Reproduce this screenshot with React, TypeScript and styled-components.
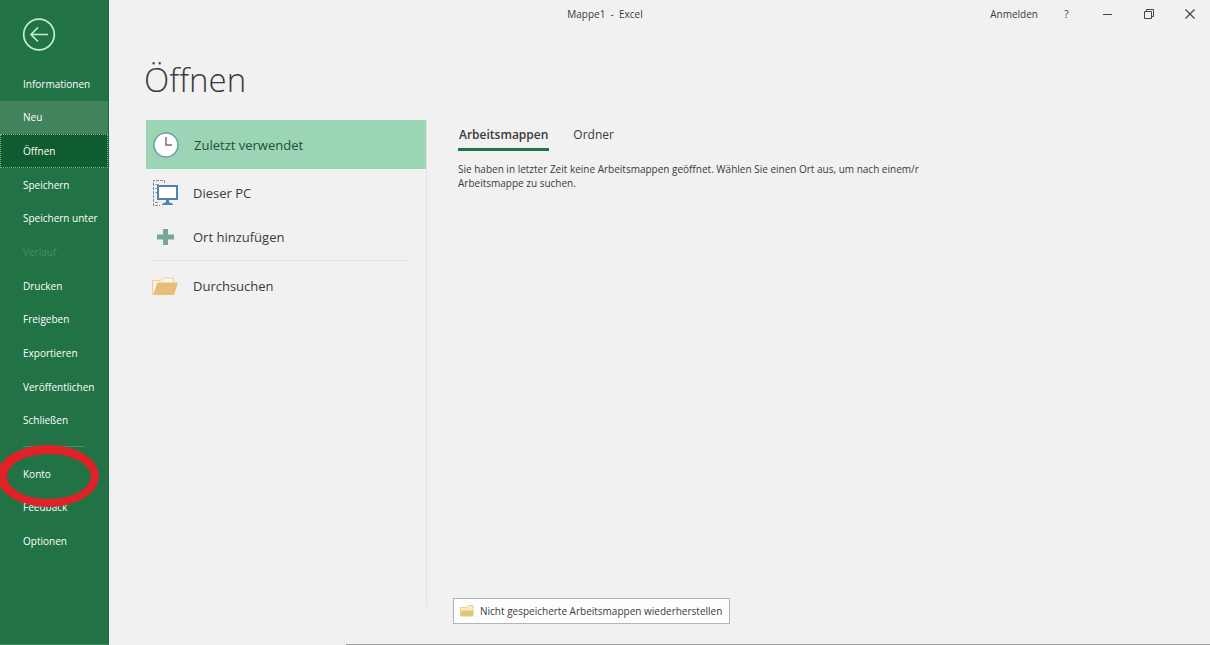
import React from "react";
import styled, { createGlobalStyle } from "styled-components";

const GlobalStyle = createGlobalStyle`
  *, *::before, *::after { box-sizing: border-box; }
  body {
    margin: 0;
    background: #f1f1f1;
    color: #3b3b3b;
    font-family: "Open Sans", "Noto Sans", sans-serif;
    font-size: 10px;
  }
  button { font: inherit; color: inherit; border: 0; background: none; padding: 0; }
  h1, p, ul { margin: 0; padding: 0; }
  ul { list-style: none; }
`;

const Shell = styled.div`
  display: grid;
  grid-template-columns: 109px minmax(0, 1fr);
  grid-template-rows: 27px 1fr 1px;
  min-height: 100vh;
`;

const TitleBar = styled.header`
  grid-column: 1 / -1;
  grid-row: 1;
  display: grid;
  grid-template-columns: 1fr auto 1fr;
  align-items: center;
`;

const DocumentTitle = styled.span`
  grid-column: 2;
  white-space: pre;
`;

const WindowControls = styled.div`
  display: flex;
  justify-content: flex-end;
  height: 27px;
`;

const SignIn = styled.button`
  padding: 0 8px;
`;

const ControlButton = styled.button`
  display: flex;
  align-items: center;
  justify-content: center;
  width: 41px;
`;

const Sidebar = styled.nav`
  grid-column: 1;
  grid-row: 1 / -1;
  z-index: 1;
  display: flex;
  flex-direction: column;
  background: #217346;
  border-right: 1px solid #1b6a43;
  border-bottom: 1px solid #3d8a5e;
  color: #fff;
`;

const BackButton = styled.button`
  width: 34px;
  height: 34px;
  margin: 17px 0 16px 22px;
  svg { display: block; }
`;

const MenuList = styled.ul<{ $height: number }>`
  display: grid;
  grid-auto-rows: 1fr;
  min-height: ${(p) => p.$height}px;
`;

const MenuEntry = styled.li`
  position: relative;
  display: grid;
`;

type MenuState = "normal" | "hover" | "active" | "disabled";

const menuBackground: Record<MenuState, string> = {
  normal: "transparent",
  hover: "#42835d",
  active: "#0e5c2f",
  disabled: "transparent",
};

const MenuButton = styled.button<{ $state: MenuState }>`
  padding: 0 0 0 23px;
  text-align: left;
  white-space: nowrap;
  background: ${(p) => menuBackground[p.$state]};
  color: ${(p) => (p.$state === "disabled" ? "#4b8f69" : "#fff")};
  outline: ${(p) => (p.$state === "active" ? "1px dotted #7fb093" : "none")};
  outline-offset: -1px;
`;

const MenuDivider = styled.hr`
  width: 61px;
  height: 1px;
  margin: 9px 0 10px 23px;
  border: 0;
  background: #439067;
`;

const Marker = styled.svg`
  position: absolute;
  left: -3px;
  top: -13px;
  z-index: 1;
  pointer-events: none;
`;

const Content = styled.main`
  grid-column: 2;
  grid-row: 2;
  display: flex;
  flex-direction: column;
  padding: 28px 24px 0 37px;
`;

const BottomEdge = styled.footer`
  grid-column: 2;
  grid-row: 3;
  margin-left: 237px;
  background: #a0a0a0;
`;

const PageTitle = styled.h1`
  font-size: 33px;
  line-height: 50px;
  font-weight: 300;
  margin: 0 0 15px -2px;
`;

const Panels = styled.div`
  flex: 1;
  display: grid;
  grid-template-columns: 281px minmax(0, 1fr);
`;

const Places = styled.section`
  margin-bottom: 37px;
  border-right: 1px solid #e3e3e3;
`;

const PlaceButton = styled.button<{ $selected?: boolean }>`
  display: flex;
  align-items: center;
  gap: 15px;
  width: 100%;
  height: ${(p) => (p.$selected ? 49 : 44)}px;
  padding-left: ${(p) => (p.$selected ? 7 : 6)}px;
  font-size: 13px;
  color: ${(p) => (p.$selected ? "#1f4f37" : "#3b3b3b")};
  background: ${(p) => (p.$selected ? "#9bd5b5" : "transparent")};
  svg { flex: none; }
`;

const PlaceGroup = styled.div`
  padding: 2px 0 1px;
`;

const PlaceDivider = styled.hr`
  height: 1px;
  margin: 0 18px 3px 6px;
  border: 0;
  background: #e2e2e2;
`;

const Recent = styled.section`
  display: flex;
  flex-direction: column;
  align-items: flex-start;
  padding: 4px 0 20px 31px;
`;

const Tabs = styled.div`
  display: flex;
  gap: 23px;
`;

const Tab = styled.button<{ $selected?: boolean }>`
  display: flex;
  height: 27px;
  font-size: 12px;
  line-height: 22px;
  padding: 0 1px;
  font-weight: ${(p) => (p.$selected ? 600 : 400)};
  border-bottom: 3px solid ${(p) => (p.$selected ? "#217346" : "transparent")};
`;

const Message = styled.p`
  max-width: 470px;
  margin-top: 11px;
  line-height: 14px;
`;

const RecoverButton = styled.button`
  display: flex;
  align-items: center;
  gap: 6px;
  height: 26px;
  margin: auto 0 0 -5px;
  padding: 0 7px 0 6px;
  border: 1px solid #b4b4b4;
  background: #fdfdfd;
  white-space: nowrap;
`;

const ClockIcon = () => (
  <svg width="26" height="26" viewBox="0 0 26 26" fill="none" aria-hidden="true">
    <circle cx="13" cy="13" r="12" fill="#fff" stroke="#6f9fa6" strokeWidth="1.5" />
    <path d="M13 5v8h6" stroke="#7d6b72" strokeWidth="1.5" />
  </svg>
);

const ComputerIcon = () => (
  <svg width="26" height="26" viewBox="0 0 26 26" fill="none" aria-hidden="true">
    <path d="M1.500 26V.5h11V4M3.500 4.500h3M3.500 8.500h2M3.500 12.500h2M3 22.500h3M3 25.500h5" stroke="#7d8ca6" strokeDasharray="3 1" />
    <path d="M6 6h19v13H6z" fill="#fff" stroke="#5680ae" strokeWidth="2" />
    <path d="M14 20h3v2l4 2v1H10v-1l4-2z" fill="#5680ae" />
  </svg>
);

const PlusIcon = () => (
  <svg width="26" height="26" viewBox="0 0 26 26" aria-hidden="true">
    <path d="M11 5h5v5.500h6v5h-6V21h-5v-5.500H5v-5h6z" fill="#77a892" />
  </svg>
);

const FolderIcon = () => (
  <svg width="26" height="26" viewBox="0 0 26 26" aria-hidden="true">
    <path d="M.5 22V7.500h8l3-2.500h10v4" fill="#fbf3df" stroke="#e6cf9f" />
    <path d="M5.500 9.500H26L22 22H1z" fill="#e8bd79" />
  </svg>
);

const SmallFolderIcon = () => (
  <svg width="14" height="14" viewBox="0 0 14 14" aria-hidden="true">
    <path d="M.5 12V3.500h6l1.500-2h5V6" fill="#f8ecc4" stroke="#e5d08e" />
    <path d="M1.500 6.500H14L13 12.500H.5z" fill="#e2c775" />
  </svg>
);

const mainMenu: { label: string; state?: MenuState }[] = [
  { label: "Informationen" },
  { label: "Neu", state: "hover" },
  { label: "Öffnen", state: "active" },
  { label: "Speichern" },
  { label: "Speichern unter" },
  { label: "Verlauf", state: "disabled" },
  { label: "Drucken" },
  { label: "Freigeben" },
  { label: "Exportieren" },
  { label: "Veröffentlichen" },
  { label: "Schließen" },
];

const accountMenu = ["Konto", "Feedback", "Optionen"];

export default function App() {
  return (
    <>
      <GlobalStyle />
      <Shell>
        <TitleBar>
          <DocumentTitle>{"Mappe1  -  Excel"}</DocumentTitle>
          <WindowControls>
            <SignIn>Anmelden</SignIn>
            <ControlButton aria-label="Hilfe">?</ControlButton>
            <ControlButton aria-label="Minimieren">
              <svg width="10" height="10" stroke="#444"><path d="M0 5.500h9" /></svg>
            </ControlButton>
            <ControlButton aria-label="Verkleinern">
              <svg width="10" height="10" fill="none" stroke="#444">
                <path d="M.5 2.500h7v7h-7zM2.500 2.500v-2h7v7h-2" />
              </svg>
            </ControlButton>
            <ControlButton aria-label="Schließen">
              <svg width="10" height="10" stroke="#444" strokeWidth="1.2"><path d="M.5.5l9 9M9.500.5l-9 9" /></svg>
            </ControlButton>
          </WindowControls>
        </TitleBar>

        <Sidebar>
          <BackButton aria-label="Zurück">
            <svg width="34" height="34" fill="none" stroke="#c4edd3" strokeWidth="1.700">
              <circle cx="17" cy="17.500" r="15.300" />
              <path d="M26 17.500H9M16 10.500l-7 7 7 7" />
            </svg>
          </BackButton>
          <MenuList $height={370}>
            {mainMenu.map(({ label, state = "normal" }) => (
              <MenuEntry key={label}>
                <MenuButton $state={state} disabled={state === "disabled"}>{label}</MenuButton>
              </MenuEntry>
            ))}
          </MenuList>
          <MenuDivider />
          <MenuList $height={101}>
            {accountMenu.map((label) => (
              <MenuEntry key={label}>
                <MenuButton $state="normal">{label}</MenuButton>
                {label === "Konto" && (
                  <Marker width="104" height="64" aria-hidden="true">
                    <path
                      fill="#e02127"
                      fillRule="evenodd"
                      d="M51 1a51 31 0 1 0 .1 0zM52 10a42 22.500 0 1 1-.1 0z"
                    />
                  </Marker>
                )}
              </MenuEntry>
            ))}
          </MenuList>
        </Sidebar>

        <Content>
          <PageTitle>Öffnen</PageTitle>
          <Panels>
            <Places>
              <PlaceButton $selected><ClockIcon />Zuletzt verwendet</PlaceButton>
              <PlaceGroup>
                <PlaceButton><ComputerIcon />Dieser PC</PlaceButton>
                <PlaceButton><PlusIcon />Ort hinzufügen</PlaceButton>
              </PlaceGroup>
              <PlaceDivider />
              <PlaceButton><FolderIcon />Durchsuchen</PlaceButton>
            </Places>
            <Recent>
              <Tabs role="tablist">
                <Tab role="tab" aria-selected="true" $selected>Arbeitsmappen</Tab>
                <Tab role="tab" aria-selected="false">Ordner</Tab>
              </Tabs>
              <Message>
                Sie haben in letzter Zeit keine Arbeitsmappen geöffnet. Wählen Sie einen Ort aus, um nach einem/r
                Arbeitsmappe zu suchen.
              </Message>
              <RecoverButton><SmallFolderIcon />Nicht gespeicherte Arbeitsmappen wiederherstellen</RecoverButton>
            </Recent>
          </Panels>
        </Content>
        <BottomEdge />
      </Shell>
    </>
  );
}
